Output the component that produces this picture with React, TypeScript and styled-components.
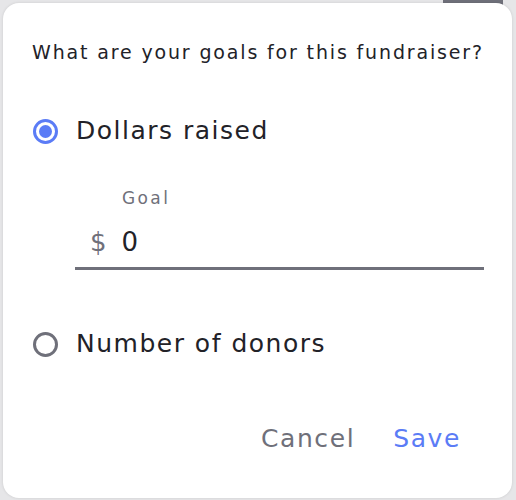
import React from "react";
import styled, { createGlobalStyle } from "styled-components";

const Global = createGlobalStyle`
  html, body { margin: 0; padding: 0; }
  body { background: #e6e6e8; font-family: "DejaVu Sans", "Lato", sans-serif; }
`;

const Page = styled.div`
  position: relative;
  width: 516px;
  height: 500px;
  box-sizing: border-box;
  padding: 3px 4px 2px 3px;
  overflow: hidden;
`;

const BackButton = styled.div`
  position: absolute;
  top: -6px;
  left: 443px;
  width: 60px;
  height: 16px;
  border-radius: 4px;
  background: #6f707a;
`;

const Dialog = styled.div`
  position: relative;
  height: 100%;
  box-sizing: border-box;
  background: #ffffff;
  border-radius: 16px;
  box-shadow: 0 0 3px rgba(0, 0, 0, 0.12);
  padding: 37px 28px 0 29px;
  display: flex;
  flex-direction: column;
`;

const Title = styled.div`
  font-size: 19px;
  line-height: 24px;
  color: #222228;
  letter-spacing: 1.85px;
  white-space: nowrap;
`;

const Option = styled.label<{ $top: number }>`
  display: flex;
  align-items: center;
  gap: 18px;
  margin-left: 1px;
  margin-top: ${(p) => p.$top}px;
  font-size: 25px;
  line-height: 32px;
  letter-spacing: 1.5px;
  color: #222228;
`;

const Radio = styled.span<{ $on?: boolean }>`
  box-sizing: border-box;
  width: 25px;
  height: 25px;
  border-radius: 50%;
  border: 3px solid ${(p) => (p.$on ? "#5b7cf6" : "#6f707a")};
  display: flex;
  align-items: center;
  justify-content: center;
  &::after {
    content: "";
    display: ${(p) => (p.$on ? "block" : "none")};
    width: 13px;
    height: 13px;
    border-radius: 50%;
    background: #5b7cf6;
  }
`;

const Field = styled.div`
  margin: 40px 0 0 43px;
  display: flex;
  flex-direction: column;
`;

const FieldLabel = styled.div`
  margin-left: 47px;
  font-size: 17px;
  line-height: 22px;
  letter-spacing: 2.4px;
  color: #6f707a;
`;

const InputRow = styled.div`
  display: flex;
  align-items: center;
  gap: 15px;
  padding: 18px 0 10px 15px;
  border-bottom: 3px solid #6f707a;
  font-size: 26px;
  line-height: 30px;
`;

const Currency = styled.span`
  color: #6f707a;
`;

const Value = styled.span`
  color: #222228;
  letter-spacing: 1px;
`;

const Actions = styled.div`
  margin-top: 63px;
  display: flex;
  justify-content: flex-end;
  gap: 38px;
  padding-right: 23px;
`;

const Action = styled.button<{ $primary?: boolean }>`
  border: none;
  background: none;
  padding: 0;
  font-family: inherit;
  font-size: 25px;
  line-height: 32px;
  letter-spacing: 1.6px;
  color: ${(p) => (p.$primary ? "#5b7cf6" : "#6f707a")};
  cursor: pointer;
`;

export default function App() {
  return (
    <>
      <Global />
      <Page>
        <BackButton />
        <Dialog>
          <Title>What are your goals for this fundraiser?</Title>
          <Option $top={51}>
            <Radio $on />
            Dollars raised
          </Option>
          <Field>
            <FieldLabel>Goal</FieldLabel>
            <InputRow>
              <Currency>$</Currency>
              <Value>0</Value>
            </InputRow>
          </Field>
          <Option $top={58}>
            <Radio />
            Number of donors
          </Option>
          <Actions>
            <Action>Cancel</Action>
            <Action $primary>Save</Action>
          </Actions>
        </Dialog>
      </Page>
    </>
  );
}
